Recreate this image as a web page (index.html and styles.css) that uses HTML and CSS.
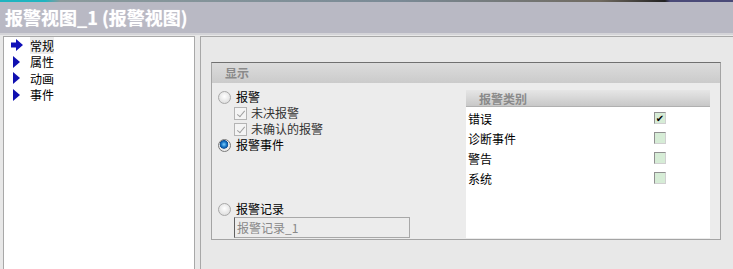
FILE: index.html
```html
<!DOCTYPE html>
<html lang="zh">
<head>
    <meta charset="UTF-8">
    <title>报警视图_1</title>
    <link rel="stylesheet" href="styles.css">
</head>
<body>
    <div class="title-bar">
        <div class="title-strip"></div>
        <h1>报警视图_1 (报警视图)</h1>
    </div>

    <div class="main">
        <!-- 左侧导航树 -->
        <ul class="nav-tree">
            <li class="active">
                <svg width="12" height="12" viewBox="0 0 12 12"><path d="M0 3.5h5V0l7 6-7 6V8.5H0z" fill="#1010b8"/></svg>
                <span>常规</span>
            </li>
            <li>
                <svg width="12" height="12" viewBox="0 0 12 12"><path d="M2 0l7 6-7 6z" fill="#1010b0"/></svg>
                <span>属性</span>
            </li>
            <li>
                <svg width="12" height="12" viewBox="0 0 12 12"><path d="M2 0l7 6-7 6z" fill="#1010b0"/></svg>
                <span>动画</span>
            </li>
            <li>
                <svg width="12" height="12" viewBox="0 0 12 12"><path d="M2 0l7 6-7 6z" fill="#1010b0"/></svg>
                <span>事件</span>
            </li>
        </ul>

        <!-- 右侧属性页 -->
        <div class="props">
            <div class="group">
                <div class="group-title">显示</div>
                <div class="group-body">
                    <div class="options">
                        <label class="opt"><span class="radio"></span>报警</label>
                        <label class="opt sub"><span class="check disabled"></span>未决报警</label>
                        <label class="opt sub"><span class="check disabled"></span>未确认的报警</label>
                        <label class="opt"><span class="radio on"></span>报警事件</label>
                        <label class="opt log"><span class="radio"></span>报警记录</label>
                        <div class="textbox">报警记录_1</div>
                    </div>
                    <div class="classes">
                        <div class="classes-head">报警类别</div>
                        <div class="class-row"><span>错误</span><span class="box checked">✔</span></div>
                        <div class="class-row"><span>诊断事件</span><span class="box"></span></div>
                        <div class="class-row"><span>警告</span><span class="box"></span></div>
                        <div class="class-row"><span>系统</span><span class="box"></span></div>
                    </div>
                </div>
            </div>
        </div>
    </div>
</body>
</html>
```

FILE: styles.css
```css
/* 报警视图属性页 */
* {
    margin: 0;
    padding: 0;
    box-sizing: border-box;
}

body {
    font-family: "Noto Sans CJK SC", "DejaVu Sans", sans-serif;
    font-size: 12px;
    color: #000;
    background-color: #e8e8e8;
    width: 733px;
    height: 269px;
    overflow: hidden;
}

/* 标题栏 */
.title-bar {
    height: 35px;
    background-color: #b9b9c4;
    border-bottom: 2px solid #d4d4d8;
}

.title-strip {
    height: 2px;
    background: linear-gradient(to right, #1fb4c0 0, #1fb4c0 45px, #8a9a9c 60px, #7a8a96 400px, #706a60 600px, #222 665px, #4a4a78 670px, #4a4a78 100%);
}

.title-bar h1 {
    font-size: 18px;
    font-weight: bold;
    color: #fff;
    line-height: 31px;
    padding-left: 5px;
    text-shadow: 0 0 1px rgba(255, 255, 255, 0.6);
}

.main {
    display: flex;
    padding-left: 3px;
    height: 234px;
}

/* 导航树 */
.nav-tree {
    list-style: none;
    width: 192px;
    margin-top: 1px;
    background-color: #fff;
    border: 1px solid #a8a8a8;
    border-bottom: none;
}

.nav-tree li {
    display: flex;
    align-items: center;
    height: 16.5px;
    padding-left: 7px;
}

.nav-tree li svg {
    margin-right: 7px;
}

.nav-tree li.active span {
    background-color: #ececec;
}

/* 属性区域 */
.props {
    flex: 1;
    margin-left: 5px;
    margin-top: 1px;
    border-left: 1px solid #a8a8a8;
    border-top: 1px solid #a8a8a8;
    padding: 25px 0 0 10px;
}

.group {
    width: 510px;
    height: 178px;
    border: 1px solid #a4a4a4;
    border-top: 1px solid #707070;
    background-color: #ececec;
    display: flex;
    flex-direction: column;
}

.group-title {
    height: 20px;
    line-height: 20px;
    padding-left: 13px;
    color: #8a8a8a;
    font-weight: bold;
    background: linear-gradient(to bottom, #dcdcdc, #cbcbcb);
}

.group-body {
    flex: 1;
    display: flex;
}

.options {
    width: 254px;
    padding: 6px 0 0 6px;
}

.opt {
    display: flex;
    align-items: center;
    height: 16px;
    line-height: 16px;
}

.opt.sub {
    padding-left: 16px;
    color: #333;
}

.opt.log {
    margin-top: 48px;
}

.radio {
    width: 13px;
    height: 13px;
    border-radius: 50%;
    border: 1px solid #a8a8a8;
    background: radial-gradient(circle at 50% 40%, #fff, #d6d6d6);
    margin-right: 5px;
}

.radio.on {
    border-color: #7a7a7a;
    background: radial-gradient(circle at 45% 40%, #7fd0ff 0, #1a78c8 2.5px, #0b4f98 4px, #e8e8e8 4.6px, #f4f4f4 100%);
}

.check {
    width: 13px;
    height: 13px;
    border: 1px solid #b4b4b4;
    background-color: #f4f4f4;
    margin-right: 4px;
    position: relative;
}

.check.disabled::after {
    content: '';
    position: absolute;
    left: 4px;
    top: 1px;
    width: 3px;
    height: 7px;
    border-right: 1px solid #a0a0a0;
    border-bottom: 1px solid #a0a0a0;
    transform: rotate(40deg);
}

.textbox {
    margin-left: 16px;
    width: 176px;
    height: 21px;
    line-height: 20px;
    border: 1px solid #a8a8a8;
    border-left-color: #606060;
    background-color: #ececec;
    color: #888;
    padding-left: 2px;
}

/* 报警类别列表 */
.classes {
    width: 244px;
    margin: 7px 0 1px 0;
    background-color: #fff;
}

.classes-head {
    height: 17px;
    line-height: 17px;
    padding-left: 13px;
    color: #8a8a8a;
    font-weight: bold;
    background: linear-gradient(to bottom, #e6e6e6, #c8c8c8);
    border-bottom: 1px solid #b0b0b0;
    margin-bottom: 1px;
}

.class-row {
    display: flex;
    justify-content: space-between;
    align-items: center;
    height: 20px;
    padding: 0 44px 0 2px;
}

.box {
    width: 12px;
    height: 12px;
    border: 1px solid #909090;
    border-right-color: #d0d0d0;
    border-bottom-color: #d0d0d0;
    background-color: #d6ecd6;
    font-size: 10px;
    line-height: 10px;
    text-align: center;
    color: #000;
}
```
